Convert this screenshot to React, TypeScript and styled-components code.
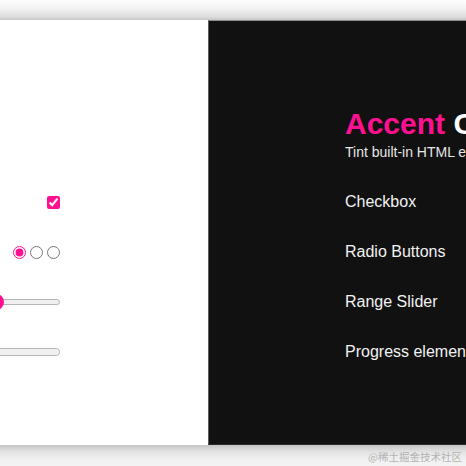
import React from "react";
import styled, { createGlobalStyle } from "styled-components";

const PINK = "#ff1090";

const Global = createGlobalStyle`
  html, body {
    margin: 0;
    padding: 0;
    width: 466px;
    height: 466px;
    overflow: hidden;
    background: #f2f2f2;
    font-family: "Liberation Sans", Arial, sans-serif;
  }
`;

const Frame = styled.div`
  width: 466px;
  height: 466px;
  display: flex;
  flex-direction: column;
  overflow: hidden;
`;

const TopBar = styled.div`
  height: 20px;
  flex-shrink: 0;
  background: linear-gradient(#fdfdfd 0%, #f5f5f5 35%, #dcdcdc 85%, #c6c6c6 100%);
`;

const Main = styled.div`
  height: 425px;
  flex-shrink: 0;
  display: flex;
  overflow: hidden;
`;

const LightPanel = styled.section`
  width: 208px;
  flex-shrink: 0;
  background: #ffffff;
  padding: 157px 148px 0 0;
  box-sizing: border-box;
  display: flex;
  flex-direction: column;
  overflow: hidden;
`;

const DarkPanel = styled.section`
  flex: 1;
  min-width: 0;
  background: #111111;
  border-left: 1px solid #5e5e5e;
  border-top: 1px solid #8c8c8c;
  border-bottom: 1px solid #2a2a2a;
  padding: 85px 0 0 136px;
  box-sizing: border-box;
  display: flex;
  flex-direction: column;
  overflow: hidden;
  white-space: nowrap;
`;

const Header = styled.header`
  display: flex;
  flex-direction: column;
  margin-bottom: 15px;
`;

const Title = styled.h1`
  margin: 0;
  font-size: 30px;
  line-height: 36px;
  font-weight: 700;
  color: #ffffff;
`;

const Accent = styled.span`
  color: ${PINK};
`;

const Subtitle = styled.p`
  margin: 0;
  font-size: 14px;
  line-height: 20px;
  color: #e6e6e6;
`;

const ControlRow = styled.div`
  height: 50px;
  flex-shrink: 0;
  display: flex;
  align-items: center;
  justify-content: flex-end;
  gap: 4px;
`;

const LabelRow = styled.div`
  height: 50px;
  flex-shrink: 0;
  display: flex;
  align-items: center;
  font-size: 16px;
  color: #f2f2f2;
`;

const Check = styled.input.attrs({ type: "checkbox" })`
  margin: 0;
  width: 13px;
  height: 13px;
  flex-shrink: 0;
  accent-color: ${PINK};
`;

const Radio = styled.input.attrs({ type: "radio" })`
  margin: 0;
  width: 13px;
  height: 13px;
  flex-shrink: 0;
  accent-color: ${PINK};
`;

const Range = styled.input.attrs({ type: "range" })`
  -webkit-appearance: none;
  appearance: none;
  margin: 0;
  width: 129px;
  height: 16px;
  flex-shrink: 0;
  background: transparent;

  &::-webkit-slider-runnable-track {
    height: 6px;
    border: 1px solid #b6b6b6;
    border-radius: 4px;
    background: linear-gradient(to right, ${PINK} 50%, #efefef 50%);
  }

  &::-webkit-slider-thumb {
    -webkit-appearance: none;
    width: 16px;
    height: 16px;
    margin-top: -6px;
    border-radius: 50%;
    background: ${PINK};
    border: none;
  }
`;

const Progress = styled.progress`
  -webkit-appearance: none;
  appearance: none;
  margin: 0;
  width: 160px;
  height: 8px;
  flex-shrink: 0;
  border: 1px solid #b6b6b6;
  border-radius: 4px;
  box-sizing: border-box;
  background: #efefef;
  overflow: hidden;

  &::-webkit-progress-bar {
    background: #efefef;
    border-radius: 4px;
  }

  &::-webkit-progress-value {
    background: ${PINK};
  }
`;

const BottomBar = styled.footer`
  flex: 1;
  display: flex;
  justify-content: flex-end;
  align-items: center;
  padding: 2px 4px 0 0;
  background: linear-gradient(#c6c6c6 0%, #e4e4e4 35%, #f1f1f1 70%, #f3f3f3 100%);
`;

const Watermark = styled.span`
  font-family: "Noto Sans CJK SC", "Liberation Sans", sans-serif;
  font-size: 10.5px;
  line-height: 14px;
  color: #b3b3b3;
`;

const labels = ["Checkbox", "Radio Buttons", "Range Slider", "Progress element"];

export default function App() {
  return (
    <>
      <Global />
      <Frame>
        <TopBar />
        <Main>
          <LightPanel>
            <ControlRow>
              <Check defaultChecked />
            </ControlRow>
            <ControlRow>
              <Radio name="demo" defaultChecked />
              <Radio name="demo" />
              <Radio name="demo" />
            </ControlRow>
            <ControlRow>
              <Range defaultValue={50} />
            </ControlRow>
            <ControlRow>
              <Progress value={20} max={100} />
            </ControlRow>
          </LightPanel>
          <DarkPanel>
            <Header>
              <Title>
                <Accent>Accent</Accent> Color
              </Title>
              <Subtitle>Tint built-in HTML elements with your brand color</Subtitle>
            </Header>
            {labels.map((l) => (
              <LabelRow key={l}>{l}</LabelRow>
            ))}
          </DarkPanel>
        </Main>
        <BottomBar>
          <Watermark>@稀土掘金技术社区</Watermark>
        </BottomBar>
      </Frame>
    </>
  );
}
